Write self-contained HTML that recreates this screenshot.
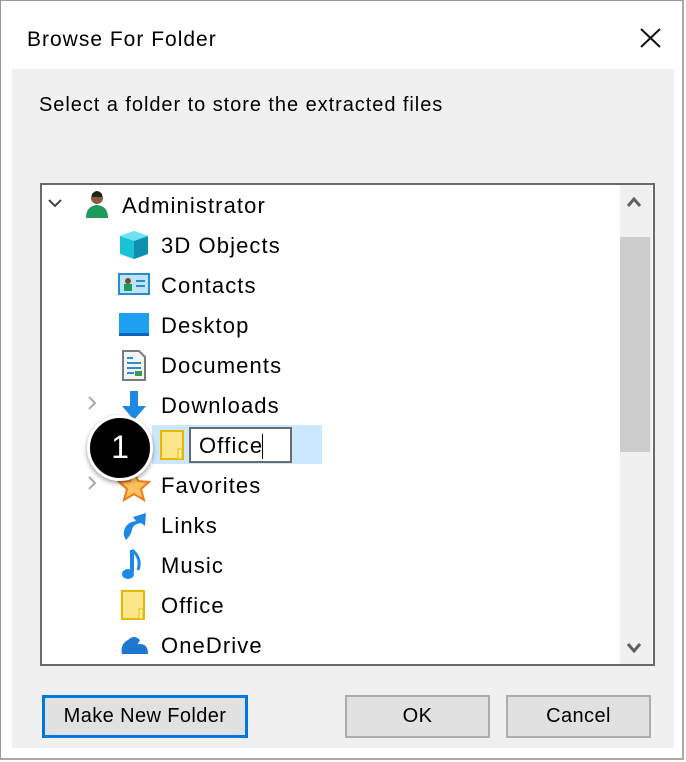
<!DOCTYPE html>
<html><head><style>
*{margin:0;padding:0;box-sizing:border-box}
body{width:686px;height:762px;background:#fff;position:relative;overflow:hidden;font-family:"Liberation Sans",sans-serif;color:#000}
.abs{position:absolute}
.dlg{left:0;top:0;width:684px;height:760px;border:1px solid #9a9a9a;border-right:2px solid #aaa;border-bottom:2px solid #aaa;background:#fff}
.t{font-size:22px;white-space:nowrap;letter-spacing:1.1px}
.btn{background:#e1e1e1;border:2px solid #adadad;font-size:20px;text-align:center;line-height:38px;letter-spacing:0.4px}
</style></head><body>
<div class="abs dlg"></div>
<div class="abs t" style="left:27px;top:28px;font-size:21px;letter-spacing:1px">Browse For Folder</div>
<svg class="abs" style="left:639px;top:27px" width="24" height="22"><path d="M2 2L21 20M21 2L2 20" stroke="#111" stroke-width="2"/></svg>
<div class="abs" style="left:12px;top:69px;width:662px;height:679px;background:#f0f0f0"></div>
<div class="abs t" style="left:39px;top:94px;font-size:20px;letter-spacing:0.95px">Select a folder to store the extracted files</div>
<div class="abs" style="left:40px;top:183px;width:615px;height:483px;background:#fff;border:2px solid #6a6a6a"></div>
<div class="abs" style="left:620px;top:185px;width:32px;height:479px;background:#f0f0f0"></div>
<div class="abs" style="left:620px;top:237px;width:30px;height:215px;background:#cdcdcd"></div>
<svg class="abs" style="left:626px;top:196px" width="16" height="12"><path d="M2 10L8 3L14 10" stroke="#606060" stroke-width="3" fill="none"/></svg>
<svg class="abs" style="left:626px;top:642px" width="16" height="12"><path d="M2 2L8 9L14 2" stroke="#606060" stroke-width="3" fill="none"/></svg>
<svg class="abs" style="left:47px;top:198px" width="18" height="12"><path d="M2 2L8 8L14 2" stroke="#444" stroke-width="2" fill="none"/></svg>
<svg class="abs" style="left:86px;top:395px" width="12" height="18"><path d="M3 2L9 8L3 14" stroke="#aaa" stroke-width="2" fill="none"/></svg>
<svg class="abs" style="left:86px;top:475px" width="12" height="18"><path d="M3 2L9 8L3 14" stroke="#aaa" stroke-width="2" fill="none"/></svg>
<svg class="abs" style="left:82px;top:188px" width="30" height="34"><circle cx="15" cy="10" r="6" fill="#8a5a3c"/><path d="M10 6Q15 0 20 6L20 9L10 9Z" fill="#222"/><path d="M4 30Q4 18 15 17Q26 18 26 30Z" fill="#1e9a5a"/></svg>
<svg class="abs" style="left:117px;top:228px" width="34" height="34"><path d="M3 8L17 3L31 8L31 26L17 31L3 26Z" fill="#19c3d6"/><path d="M17 13L31 8L31 26L17 31Z" fill="#0e8fb0"/><path d="M3 8L17 13L31 8L17 3Z" fill="#6ee3ef"/></svg>
<svg class="abs" style="left:118px;top:272px" width="32" height="26"><rect x="1" y="2" width="30" height="20" fill="#bde4f7" stroke="#2b8ccc" stroke-width="2"/><circle cx="10" cy="9" r="3" fill="#7a4a30"/><rect x="6" y="12" width="8" height="7" fill="#1e9a5a"/><path d="M18 9H27M18 14H27" stroke="#2b8ccc" stroke-width="2"/></svg>
<svg class="abs" style="left:118px;top:312px" width="32" height="26"><rect x="1" y="1" width="30" height="22" fill="#1ea0f0"/><rect x="1" y="21" width="30" height="3" fill="#0a64b8"/></svg>
<svg class="abs" style="left:120px;top:350px" width="28" height="32"><path d="M3 1H19L25 7V30H3Z" fill="#f4f4f4" stroke="#7a7a7a" stroke-width="2"/><path d="M7 8H13M7 13H21M7 18H21M7 23H14" stroke="#2b8ccc" stroke-width="2"/><rect x="15" y="21" width="7" height="5" fill="#3a9a5a"/></svg>
<svg class="abs" style="left:118px;top:390px" width="32" height="32"><path d="M12 1H20V16H28L16 30L4 16H12Z" fill="#1e88e5"/></svg>
<div class="abs" style="left:152px;top:425px;width:170px;height:39px;background:#cce8ff"></div>
<svg class="abs" style="left:159px;top:429px" width="28" height="32"><rect x="2" y="2" width="22" height="28" fill="#fde58a" stroke="#e8b800" stroke-width="2"/><rect x="19" y="20" width="4" height="10" fill="#fff2b0" stroke="#e8b800" stroke-width="1"/></svg>
<div class="abs" style="left:189px;top:427px;width:103px;height:36px;background:#fff;border:2px solid #6a6a6a"></div>
<div class="abs t" style="left:199px;top:433px;letter-spacing:1.2px">Office<span style="display:inline-block;width:1px;height:25px;background:#000;vertical-align:-6px;margin-left:-1px"></span></div>
<svg class="abs" style="left:117px;top:469px" width="34" height="34"><path d="M17 2L21 12L32 13L24 20L27 31L17 25L7 31L10 20L2 13L13 12Z" fill="#fbc35c" stroke="#f07a20" stroke-width="2"/></svg>
<svg class="abs" style="left:120px;top:510px" width="30" height="32"><path d="M6 30Q2 24 5 18Q8 12 16 11L13 7L26 3L25 16L21 13Q13 14 12 20Q11 25 6 30Z" fill="#1e88e5"/></svg>
<svg class="abs" style="left:120px;top:548px" width="28" height="34"><path d="M12 2L12 24" stroke="#1e88e5" stroke-width="4"/><ellipse cx="8" cy="26" rx="6" ry="5" fill="#1e88e5"/><path d="M12 2Q22 10 18 22" stroke="#1e88e5" stroke-width="3" fill="none"/></svg>
<svg class="abs" style="left:120px;top:589px" width="28" height="32"><rect x="2" y="2" width="22" height="28" fill="#fde58a" stroke="#e8b800" stroke-width="2"/><rect x="19" y="20" width="4" height="10" fill="#fff2b0" stroke="#e8b800" stroke-width="1"/></svg>
<svg class="abs" style="left:118px;top:632px" width="32" height="26"><path d="M4 22Q2 12 10 8Q16 2 22 8L14 22Z" fill="#1e78d0"/><path d="M12 22Q14 12 22 12Q30 12 30 22Z" fill="#1e78d0"/></svg>
<div class="abs t" style="left:122px;top:193px">Administrator</div>
<div class="abs t" style="left:161px;top:233px">3D Objects</div>
<div class="abs t" style="left:161px;top:273px">Contacts</div>
<div class="abs t" style="left:161px;top:313px">Desktop</div>
<div class="abs t" style="left:161px;top:353px">Documents</div>
<div class="abs t" style="left:161px;top:393px">Downloads</div>
<div class="abs t" style="left:161px;top:473px">Favorites</div>
<div class="abs t" style="left:161px;top:513px">Links</div>
<div class="abs t" style="left:161px;top:553px">Music</div>
<div class="abs t" style="left:161px;top:593px">Office</div>
<div class="abs t" style="left:161px;top:633px">OneDrive</div>
<div class="abs" style="left:87px;top:415px;width:66px;height:66px;border-radius:50%;background:#000;border:3px solid #fff;box-shadow:0 2px 5px rgba(0,0,0,.4);color:#fff;font-size:32px;text-align:center;line-height:58px">1</div>
<div class="abs btn" style="left:42px;top:695px;width:206px;height:43px;border:3px solid #0078d7;line-height:37px">Make New Folder</div>
<div class="abs btn" style="left:345px;top:695px;width:145px;height:43px">OK</div>
<div class="abs btn" style="left:506px;top:695px;width:145px;height:43px">Cancel</div>
</body></html>
